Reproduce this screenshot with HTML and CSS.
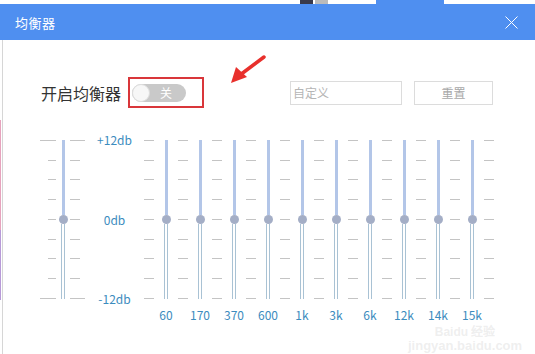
FILE: index.html
```html
<!DOCTYPE html>
<html lang="zh-CN">

<head>
    <meta charset="UTF-8">
    <meta name="viewport" content="width=device-width, initial-scale=1.0">
    <title>均衡器</title>
    <link rel="stylesheet" href="styles.css">
</head>

<body>
    <div class="topstrip"><span class="tab"></span><span class="icon dark"></span><span class="icon"></span></div>
    <div class="dialog">
        <header class="titlebar">
            <h1>均衡器</h1>
            <svg class="close" width="13" height="13" viewBox="0 0 13 13">
                <path d="M0.5 0.5L12.5 12.5M12.5 0.5L0.5 12.5" stroke="#fff" stroke-width="1" fill="none" />
            </svg>
        </header>
        <div class="body">
            <div class="edge"></div>
            <main>
                <div class="setting">
                    <span class="setting-label">开启均衡器</span>
                    <div class="highlight">
                        <div class="toggle"><span class="knob"></span><span class="state">关</span></div>
                    </div>
                    <input class="preset" type="text" placeholder="自定义">
                    <button class="reset">重置</button>
                </div>

                <div class="eq">
                    <div class="ticks ticks-left"></div>
                    <div class="band preamp">
                        <div class="slider"><span class="fill"></span><span class="thumb"></span><span class="rest"></span></div>
                    </div>
                    <div class="ticks ticks-right"></div>
                    <div class="db-labels">
                        <span>+12db</span>
                        <span>0db</span>
                        <span>-12db</span>
                    </div>

                    <div class="ticks"></div>
                    <div class="band"><div class="slider"><span class="fill"></span><span class="thumb"></span><span class="rest"></span></div><span class="freq">60</span></div>
                    <div class="ticks"></div>
                    <div class="band"><div class="slider"><span class="fill"></span><span class="thumb"></span><span class="rest"></span></div><span class="freq">170</span></div>
                    <div class="ticks"></div>
                    <div class="band"><div class="slider"><span class="fill"></span><span class="thumb"></span><span class="rest"></span></div><span class="freq">370</span></div>
                    <div class="ticks"></div>
                    <div class="band"><div class="slider"><span class="fill"></span><span class="thumb"></span><span class="rest"></span></div><span class="freq">600</span></div>
                    <div class="ticks"></div>
                    <div class="band"><div class="slider"><span class="fill"></span><span class="thumb"></span><span class="rest"></span></div><span class="freq">1k</span></div>
                    <div class="ticks"></div>
                    <div class="band"><div class="slider"><span class="fill"></span><span class="thumb"></span><span class="rest"></span></div><span class="freq">3k</span></div>
                    <div class="ticks"></div>
                    <div class="band"><div class="slider"><span class="fill"></span><span class="thumb"></span><span class="rest"></span></div><span class="freq">6k</span></div>
                    <div class="ticks"></div>
                    <div class="band"><div class="slider"><span class="fill"></span><span class="thumb"></span><span class="rest"></span></div><span class="freq">12k</span></div>
                    <div class="ticks"></div>
                    <div class="band"><div class="slider"><span class="fill"></span><span class="thumb"></span><span class="rest"></span></div><span class="freq">14k</span></div>
                    <div class="ticks"></div>
                    <div class="band"><div class="slider"><span class="fill"></span><span class="thumb"></span><span class="rest"></span></div><span class="freq">15k</span></div>
                    <div class="ticks"></div>
                </div>
            </main>
        </div>
    </div>

    <!-- annotation arrow and watermark sit over the dialog -->
    <svg class="arrow" width="40" height="32" viewBox="0 0 40 32">
        <path d="M36 2 L12 20" stroke="#e8302c" stroke-width="3.5" stroke-linecap="round" fill="none" />
        <path d="M3 28 L8 12 L19 22 Z" fill="#e8302c" />
    </svg>
    <div class="watermark">
        <span class="wm-brand">Baidu 经验</span>
        <span class="wm-url">jingyan.baidu.com</span>
    </div>
</body>

</html>
```

FILE: styles.css
```css
* {
    box-sizing: border-box;
    margin: 0;
    padding: 0;
}

body {
    width: 535px;
    height: 354px;
    overflow: hidden;
    background: #fff;
    font-family: 'Noto Sans CJK SC', 'Noto Sans', sans-serif;
    --blue: #4f8ff0;
    --label: #3c8cbe;
    --tick: #c4c4c4;
    position: relative;
}

.topstrip {
    height: 4px;
    display: flex;
    background: #fff;
}

.topstrip .icon {
    width: 13px;
    height: 4px;
    background: #bbb;
    margin-left: 2px;
}

.topstrip .dark {
    order: -1;
    margin-left: 300px;
    background: #3a3a4a;
}

.topstrip .tab {
    order: 1;
    width: 68px;
    height: 4px;
    margin-left: 48px;
    background: var(--blue);
}

.titlebar {
    height: 36px;
    background: var(--blue);
    display: flex;
    align-items: center;
    justify-content: space-between;
    padding: 0 17px 0 15px;
}

.titlebar h1 {
    font-size: 13px;
    font-weight: 400;
    color: #fff;
    letter-spacing: 0.5px;
}

.body {
    display: flex;
    height: 314px;
}

.edge {
    width: 3px;
    border-right: 1px solid #d6d6d6;
    background: linear-gradient(to bottom, #fff 0 80px, #e7a3bd 80px 190px, #b79ad8 190px 260px, #fff 260px);
    background-size: 1px 100%;
    background-repeat: no-repeat;
}

main {
    flex: 1;
}

.setting {
    display: flex;
    align-items: center;
    margin: 37px 0 0 38px;
    height: 31px;
}

.setting-label {
    font-size: 16px;
    color: #333;
    width: 87px;
}

.highlight {
    width: 76px;
    height: 31px;
    border: 2px solid #d9363a;
    padding: 1px 0 0 2px;
    display: flex;
    align-items: center;
}

.toggle {
    width: 54px;
    height: 18px;
    border-radius: 9px;
    background: #c9c9c9;
    display: flex;
    align-items: center;
}

.toggle .knob {
    width: 18px;
    height: 18px;
    border-radius: 50%;
    background: #f7f7f7;
    border: 1px solid #ddd;
}

.toggle .state {
    font-size: 12px;
    color: #fff;
    margin-left: 10px;
    line-height: 1;
}

.preset {
    margin-left: 86px;
    width: 112px;
    height: 24px;
    border: 1px solid #dcdcdc;
    padding-left: 2px;
    font: 12px 'Noto Sans CJK SC', sans-serif;
    outline: none;
}

.preset::placeholder {
    color: #b5b5b5;
}

.reset {
    margin-left: 12px;
    width: 79px;
    height: 24px;
    border: 1px solid #dcdcdc;
    background: #fff;
    font: 12px 'Noto Sans CJK SC', sans-serif;
    color: #a8a8a8;
}

.eq {
    display: flex;
    align-items: flex-start;
    margin: 32px 0 0 37px;
}

.ticks {
    width: 10px;
    height: 159px;
    background: repeating-linear-gradient(to bottom, var(--tick) 0 1px, transparent 1px 19.75px);
}

.ticks-left,
.ticks-right {
    background:
        linear-gradient(var(--tick), var(--tick)) top / 100% 1px no-repeat,
        linear-gradient(var(--tick), var(--tick)) bottom / 100% 1px no-repeat,
        repeating-linear-gradient(to bottom, var(--tick) 0 1px, transparent 1px 19.75px) right / 8px 100% no-repeat;
}

.ticks-left {
    width: 16px;
}

.ticks-right {
    width: 15px;
    background-position: top, bottom, left;
    background-size: 100% 1px, 100% 1px, 10px 100%;
}

.band {
    width: 24px;
    display: flex;
    flex-direction: column;
    align-items: center;
}

.band.preamp {
    width: 14px;
}

.slider {
    height: 159px;
    display: flex;
    flex-direction: column;
    align-items: center;
}

.slider .fill {
    width: 3px;
    height: 75px;
    background: #b3c6e8;
}

.slider .thumb {
    width: 9px;
    height: 9px;
    border-radius: 50%;
    background: #a4aec6;
}

.slider .rest {
    flex: 1;
    width: 4px;
    border-left: 1px solid #a9c2d4;
    border-right: 1px solid #a9c2d4;
}

.freq {
    margin-top: 9px;
    font-size: 12px;
    line-height: 14px;
    color: var(--label);
    white-space: nowrap;
}

.db-labels {
    width: 59px;
    height: 173px;
    margin-top: -7px;
    display: flex;
    flex-direction: column;
    justify-content: space-between;
    align-items: center;
    font-size: 12px;
    line-height: 14px;
    color: var(--label);
}

.arrow {
    position: absolute;
    left: 228px;
    top: 55px;
}

.watermark {
    position: absolute;
    left: 408px;
    top: 326px;
    display: flex;
    flex-direction: column;
    align-items: center;
    color: rgba(200, 200, 200, 0.3);
    font-family: 'Liberation Sans', sans-serif;
    font-weight: 700;
    pointer-events: none;
}

.wm-brand {
    font-size: 12px;
    line-height: 13px;
}

.wm-url {
    font-size: 13px;
    line-height: 14px;
}
```
